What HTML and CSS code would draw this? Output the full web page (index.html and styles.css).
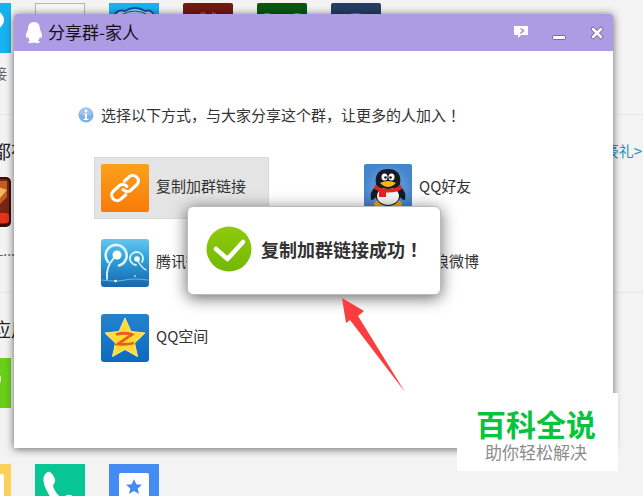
FILE: index.html
```html
<!DOCTYPE html>
<html lang="zh-CN">
<head>
  <meta charset="UTF-8" />
  <meta name="viewport" content="width=device-width, initial-scale=1.0" />
  <title>分享群-家人</title>
  <link rel="stylesheet" href="styles.css">
</head>
<body>
  <!-- 应用页 -->
  <div class="page">
    <section class="section first">
      <div class="apps">
        <svg class="app" viewBox="0 0 50 50"><rect width="50" height="50" fill="#17b3ee"/><circle cx="34" cy="17" r="9" fill="#fff"/></svg>
        <svg class="app" viewBox="0 0 50 50"><rect x="0.5" y="0.5" width="49" height="49" fill="#f5f5f5" stroke="#b5b5b8"/></svg>
        <svg class="app" viewBox="0 0 50 50"><rect width="50" height="50" fill="#17b3ee"/><path d="M5 14Q7 6 16 8Q26 2 36 8Q44 6 45 14" fill="#a9dcf5" stroke="#184a9e" stroke-width="2"/><path d="M12 12Q26 4 39 12" fill="none" stroke="#184a9e"/></svg>
        <svg class="app" viewBox="0 0 50 50"><rect width="50" height="50" rx="2" fill="#701a10"/><path d="M17 11l4-1 2 4M29 10l4 1" stroke="#a95723" stroke-width="2" fill="none"/></svg>
        <svg class="app" viewBox="0 0 50 50"><rect width="50" height="50" rx="2" fill="#08590f"/><ellipse cx="10" cy="12" rx="4" ry="2" fill="#7cb52c"/><ellipse cx="40" cy="12" rx="4" ry="2" fill="#7cb52c"/></svg>
        <svg class="app" viewBox="0 0 50 50"><rect width="50" height="50" rx="2" fill="#263d64"/><ellipse cx="25" cy="12" rx="6" ry="2" fill="#8d8a4c"/></svg>
      </div>
      <p class="app-name">连接</p>
    </section>
    <section class="section">
      <div class="section-head">
        <h2>都有</h2>
        <a class="more" href="#">领豪礼&gt;</a>
      </div>
      <div class="apps">
        <svg class="app" viewBox="0 0 50 50"><rect width="50" height="50" rx="5" fill="#3a0d0a"/><rect x="2" y="2" width="46" height="45" rx="4" fill="#7a2412"/><path d="M30 4h16v16L34 32Z" fill="#c0601f"/><path d="M38 10l8 3-8 9Z" fill="#f0b860"/><rect x="2" y="36" width="46" height="10" rx="3" fill="#e03318"/></svg>
      </div>
      <p class="app-name dots">QL...</p>
    </section>
    <section class="section">
      <div class="section-head">
        <h2>应用</h2>
      </div>
      <div class="apps">
        <svg class="app" viewBox="0 0 50 50"><rect width="50" height="50" fill="#69cf19"/><ellipse cx="35" cy="21" rx="5" ry="7" fill="#fff"/></svg>
      </div>
      <div class="apps next-row">
        <svg class="app" viewBox="0 0 50 50"><rect width="50" height="50" fill="#fbd05b"/><rect x="8" y="10" width="35" height="40" rx="2" fill="#fff"/></svg>
        <svg class="app" viewBox="0 0 50 50"><rect width="50" height="50" fill="#08c594"/><path d="M9 12Q12 7 15 8Q21 13 20 18Q17 21 19 25Q22 31 27 34Q32 30 36 31L43 37Q42 44 35 45Q18 41 12 27Q7 18 9 12Z" fill="#fff"/></svg>
        <svg class="app" viewBox="0 0 50 50"><rect width="50" height="50" fill="#448bf3"/><rect x="10" y="9" width="30" height="41" rx="2" fill="#fff"/><path d="M25 15l2.300 5.200 5.700.5-4.300 3.700 1.300 5.600-5-3-5 3 1.300-5.600-4.300-3.700 5.700-.5Z" fill="#448bf3"/></svg>
      </div>
    </section>
  </div>

  <!-- 分享窗口 -->
  <div class="window">
    <header class="titlebar">
      <svg class="logo" width="18" height="22" viewBox="0 0 18 22"><path d="M9 0C4.500 0 3 3.500 3 7.500C2 9.500 .5 12.500 1 15.500C1.500 16.500 2.500 15.500 3 14.500Q3.500 17 5 18.500Q3 19 3 20Q4 22 9 20.500Q14 22 15 20Q15 19 13 18.500Q14.500 17 15 14.500C15.500 15.500 16.500 16.500 17 15.500C17.500 12.500 16 9.500 15 7.500C15 3.500 13.500 0 9 0Z" fill="#fff"/></svg>
      <h1>分享群-家人</h1>
      <button class="control" type="button" aria-label="反馈">
        <svg width="14" height="14" viewBox="0 0 14 14"><path d="M0 0h14v9H7l-3 3v-3H0Z" fill="#fff"/><path d="M6.500 2.500l3 2-3 3" fill="none" stroke="#a08cd0" stroke-width="1.500"/></svg>
      </button>
      <button class="control" type="button" aria-label="最小化">
        <svg width="14" height="14" viewBox="0 0 14 14"><rect x="0.500" y="9.500" width="13" height="4" rx="1.500" fill="#fff" stroke="#7c6aa6"/></svg>
      </button>
      <button class="control" type="button" aria-label="关闭">
        <svg width="14" height="14" viewBox="0 0 14 14"><path d="M3 3l8 8M11 3l-8 8" stroke="#7c6aa6" stroke-width="4.500" stroke-linecap="round"/><path d="M3 3l8 8M11 3l-8 8" stroke="#fff" stroke-width="2.500" stroke-linecap="round"/></svg>
      </button>
    </header>

    <div class="content">
      <p class="tip">
        <svg width="16" height="16" viewBox="0 0 16 16"><circle cx="8" cy="8" r="7.500" fill="#82b1e8"/><path d="M1.500 7a6.500 6.500 0 0 1 13 0Q8 10 1.500 7Z" fill="#9cc3f0"/><circle cx="8" cy="4" r="1.400" fill="#fff"/><path d="M6 6.500h3V12h1.500v1h-5v-1H7V7.500H6Z" fill="#fff"/></svg>
        <span>选择以下方式，与大家分享这个群，让更多的人加入<span class="mark" lang="zh-TW">！</span></span>
      </p>

      <div class="share-list">
        <button class="share active" type="button">
          <svg class="share-icon" viewBox="0 0 48 48">
            <defs><linearGradient id="orange" x2="0" y2="1"><stop stop-color="#fba11d"/><stop offset="1" stop-color="#f97b09"/></linearGradient></defs>
            <rect width="48" height="48" rx="2" fill="url(#orange)"/>
            <g transform="rotate(-42 24 24)" fill="none" stroke="#fff" stroke-width="3.200" stroke-linecap="round">
              <path d="M20 29.500H13.500a5.500 5.500 0 0 1 0-11H21.500a5.500 5.500 0 0 1 5 5.500"/>
              <path d="M28 18.500H34.500a5.500 5.500 0 0 1 0 11H26.500a5.500 5.500 0 0 1-5-5.500"/>
            </g>
          </svg>
          <span>复制加群链接</span>
        </button>
        <button class="share" type="button">
          <svg class="share-icon" viewBox="0 0 48 48">
            <defs><radialGradient id="friend"><stop stop-color="#79b1e6"/><stop offset="1" stop-color="#4585cb"/></radialGradient></defs>
            <rect width="48" height="48" rx="2" fill="url(#friend)"/>
            <ellipse cx="17" cy="40" rx="7" ry="4" fill="#f5a913"/><ellipse cx="31" cy="40" rx="7" ry="4" fill="#f5a913"/>
            <path d="M12 22Q5 28 7 36Q11 36 13 31ZM36 22Q43 28 41 36Q37 36 35 31Z" fill="#161b23"/>
            <ellipse cx="24" cy="29" rx="13" ry="13" fill="#161b23"/>
            <ellipse cx="24" cy="32" rx="11" ry="9" fill="#f6f6f6"/>
            <path d="M12 21C10 9 16 5 24 5S38 9 36 21Q24 29 12 21Z" fill="#161b23"/>
            <ellipse cx="20.500" cy="13" rx="3" ry="3.500" fill="#fff"/><ellipse cx="27.500" cy="13" rx="3" ry="3.500" fill="#fff"/>
            <circle cx="21.500" cy="13.500" r="1.300" fill="#111"/><circle cx="26.500" cy="13.500" r="1.300" fill="#111"/>
            <path d="M16 19Q24 15 32 19Q28 23 24 23T16 19Z" fill="#f8b414"/>
            <path d="M11 21Q24 29 37 21L38 25Q32 29 22 28.500V33H15V27L10 25Z" fill="#df2520"/>
          </svg>
          <span>QQ好友</span>
        </button>
        <button class="share" type="button">
          <svg class="share-icon" viewBox="0 0 48 48">
            <defs><linearGradient id="blue" x2="0" y2="1"><stop stop-color="#65c6ee"/><stop offset="0.400" stop-color="#2fa2dc"/><stop offset="1" stop-color="#1767ad"/></linearGradient></defs>
            <rect width="48" height="48" rx="3" fill="url(#blue)"/>
            <g fill="none" stroke="#dff3fd" stroke-linecap="round">
              <path d="M7 23A10.500 10.500 0 1 1 18 26.500" stroke-width="2.600"/>
              <path d="M13 19Q5 27 6 40" stroke-width="1.800"/>
              <path d="M35 26A6.500 6.500 0 1 1 41 23" stroke-width="1.800"/>
              <path d="M37 22Q40 28 45 31" stroke-width="1.400"/>
              <path d="M1 41Q15 43 24 41T47 41" stroke="#6ab8e4"/>
            </g>
            <circle cx="16" cy="16" r="4.500" fill="#fff"/><circle cx="36" cy="20" r="2.800" fill="#fff"/>
            <circle cx="14.500" cy="42" r="1.300" fill="#fff"/><circle cx="34" cy="37" r="1" fill="#a9d8f2"/>
          </svg>
          <span>腾讯微博</span>
        </button>
        <button class="share" type="button">
          <svg class="share-icon" viewBox="0 0 48 48"><rect width="48" height="48" rx="3" fill="#e6162d"/><ellipse cx="22" cy="28" rx="14" ry="10" fill="#fff"/><circle cx="21" cy="29" r="5" fill="#222"/></svg>
          <span>新浪微博</span>
        </button>
        <button class="share" type="button">
          <svg class="share-icon" viewBox="0 0 48 48">
            <defs><linearGradient id="zone" x2="0" y2="1"><stop stop-color="#2583cd"/><stop offset="1" stop-color="#0d6ac0"/></linearGradient></defs>
            <rect width="48" height="48" rx="3" fill="url(#zone)"/>
            <path d="M24 4l6 13.500 14 1.500-10.500 10 3 13.500L24 35.500 11.500 42.500l3-13.500L4 19l14-1.500Z" fill="#fedc35" stroke="#fbe981"/>
            <path d="M15 20.500Q24 18 31 20.500L17 30Q25 31 33 29" fill="none" stroke="#ea5f17" stroke-width="2.800"/>
          </svg>
          <span>QQ空间</span>
        </button>
      </div>
    </div>

    <div class="toast" role="status">
      <svg width="46" height="46" viewBox="0 0 46 46">
        <defs><linearGradient id="green" x2="0" y2="1"><stop stop-color="#8fcb0a"/><stop offset="1" stop-color="#74b806"/></linearGradient></defs>
        <circle cx="23" cy="23" r="22.500" fill="url(#green)"/>
        <path d="M10 23l11.500 10L37 16" fill="none" stroke="#fff" stroke-width="4.500" stroke-linecap="round" stroke-linejoin="round"/>
      </svg>
      <strong>复制加群链接成功<span class="mark" lang="zh-TW">！</span></strong>
    </div>

    <svg class="arrow" width="66" height="96" viewBox="0 0 66 96"><path d="M1 0L23 13L17 18L64 94L9 22L5 25Z" fill="#fb3d3d"/></svg>
  </div>

  <div class="brand">
    <b>百科全说</b>
    <span>助你轻松解决</span>
  </div>
</body>
</html>
```
FILE: styles.css
```css
* {
  box-sizing: border-box;
}
body {
  margin: 0;
  min-height: 100vh;
  position: relative;
  overflow: hidden;
  background: #f3f3f3;
  color: #333;
  font-family: "Noto Sans CJK SC", sans-serif;
  font-size: 15px;
}
h1, h2, p {
  margin: 0;
  font-weight: normal;
}
button {
  padding: 0;
  border: 0;
  background: none;
  color: inherit;
  font: inherit;
  cursor: pointer;
}
svg {
  display: block;
  flex: none;
}

/* 应用页 */
.page {
  height: 100vh;
  margin-left: -39px;
  overflow: hidden;
}
.section {
  height: 178px;
  border-bottom: 1px solid #e9e9e9;
}
.section:last-child {
  height: auto;
  border: 0;
}
.section.first {
  height: 115px;
  padding-top: 3px;
}
.apps {
  display: flex;
  gap: 24px;
}
.app {
  width: 50px;
  height: 50px;
}
.next-row {
  margin-top: 56px;
}
.app-name {
  width: 46px;
  padding-top: 11px;
  line-height: 18px;
  font-size: 14px;
  text-align: right;
  color: #666;
}
.app-name.dots {
  width: 54px;
  padding-top: 14px;
}
.section-head {
  display: flex;
  justify-content: space-between;
  height: 62px;
  padding: 24px 1px 0 31px;
}
.section:last-child .section-head {
  height: 65px;
}
.section-head h2 {
  font-size: 19px;
  line-height: 24px;
  color: #222;
}
.more {
  color: #1b94b8;
  line-height: 24px;
  text-decoration: none;
}

/* 分享窗口 */
.window {
  position: absolute;
  top: 14px;
  left: 14px;
  right: 30px;
  background: #fff;
  border-radius: 3px 3px 0 0;
  box-shadow: 0 1px 8px rgba(0, 0, 0, 0.6);
}
.titlebar {
  display: flex;
  align-items: center;
  height: 37px;
  padding: 0 9px 0 11px;
  background: #ad9be4;
  border-radius: 3px 3px 0 0;
}
.titlebar h1 {
  flex: 1;
  margin-left: 5px;
  padding-bottom: 2px;
  font-size: 17px;
  color: #111;
}
.control {
  margin-left: 24px;
}
.content {
  padding: 51px 81px 79px 64px;
}
.tip {
  display: flex;
  align-items: center;
  gap: 7px;
  height: 26px;
}
.tip > span {
  padding-bottom: 2px;
}
.share-list {
  display: grid;
  grid-template-columns: 1fr 1fr;
  gap: 13px 88px;
  margin: 29px 0 0 16px;
}
.share {
  display: flex;
  align-items: center;
  gap: 7px;
  width: 175px;
  height: 62px;
  padding-left: 7px;
}
.share span {
  padding-bottom: 6px;
}
.share.active {
  background: #e4e4e4;
  box-shadow: inset 0 0 0 1px #dadada;
}
.share-icon {
  width: 48px;
  height: 48px;
}
.mark {
  font-family: "Noto Sans CJK TC", sans-serif;
}

/* 成功提示 */
.toast {
  position: absolute;
  top: 192px;
  left: 173px;
  display: flex;
  align-items: center;
  gap: 9px;
  width: 254px;
  height: 89px;
  padding: 0 0 4px 18px;
  background: #fff;
  border: 1px solid #bbb;
  border-radius: 6px;
  box-shadow: 0 3px 16px rgba(0, 0, 0, 0.6);
}
.toast strong {
  font-size: 18px;
  white-space: nowrap;
}
.arrow {
  position: absolute;
  top: 284px;
  left: 327px;
}

.brand {
  position: absolute;
  right: 25px;
  bottom: 25px;
  display: flex;
  flex-direction: column;
  align-items: center;
  width: 161px;
  padding: 13px 3px 8px 0;
  background: #fff;
}
.brand b {
  font-size: 30px;
  line-height: 34px;
  color: #08c43c;
}
.brand span {
  font-size: 17px;
  line-height: 23px;
  color: #8c8c8c;
}
```
